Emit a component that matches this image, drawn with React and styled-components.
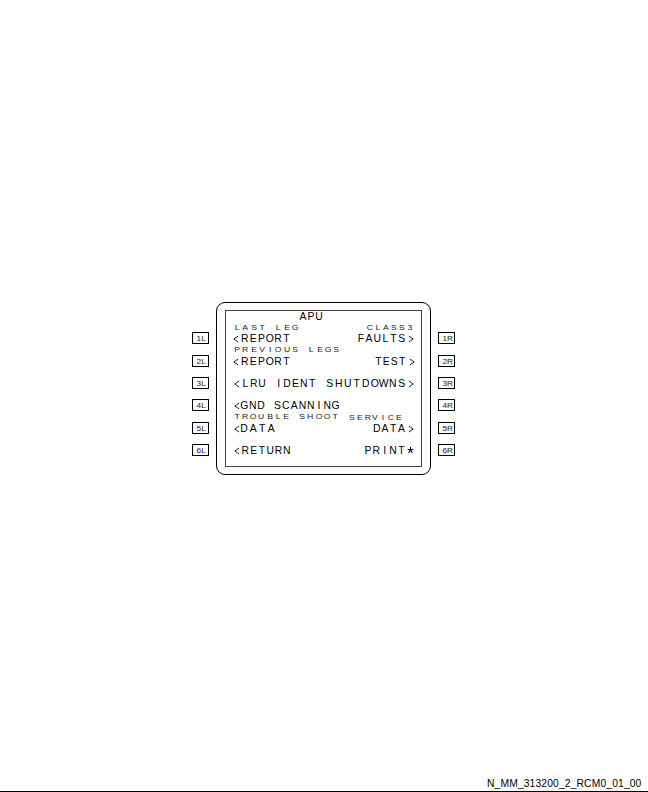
import React from "react";
import styled, { createGlobalStyle } from "styled-components";

const GlobalStyle = createGlobalStyle`
  * { box-sizing: border-box; }
  body { margin: 0; background: #fff; color: #000; font-family: "Liberation Sans", Arial, sans-serif; }
`;

const Page = styled.main`
  width: 648px;
  height: 792px;
  display: flex;
  flex-direction: column;
  justify-content: space-between;
  padding-top: 302px;
  border-bottom: 1px solid #000;
  overflow: hidden;
`;

const Unit = styled.section`
  display: flex;
  gap: 7px;
  margin-left: 192px;
`;

const KeyColumn = styled.div`
  display: grid;
  grid-template-rows: 23px 22px 22px 23px 22px 12px;
  width: 17px;
  padding-top: 30px;
`;

const Key = styled.div`
  height: 12px;
  display: flex;
  justify-content: center;
  padding-left: ${(p) => (p.$side === "R" ? 2 : 1)}px;
  border: 1px solid #000;
  font-size: 7.5px;
  line-height: 11px;
  color: #222;
`;

const KeyText = styled.span`
  transform: scaleX(1.1);
`;

const Bezel = styled.div`
  width: 215px;
  height: 173px;
  padding: 7px 8px;
  border: 1px solid #000;
  border-radius: 9px;
`;

const Screen = styled.div`
  width: 197px;
  height: 157px;
  border: 1px solid #444;
`;

const Title = styled.div`
  height: 11px;
  padding-left: 73px;
  line-height: 12px;
`;

const Row = styled.div`
  height: ${(p) => p.$height}px;
  display: flex;
  flex-direction: column;
  justify-content: flex-end;
`;

const Line = styled.div`
  display: flex;
  justify-content: space-between;
  height: ${(p) => (p.$small ? 10 : 12)}px;
  line-height: ${(p) => (p.$small ? 11 : 13)}px;
  padding: 0 7px 0 8px;
`;

const Side = styled.div`
  display: flex;
  gap: ${(p) => p.$gap || 0}px;
  margin: ${(p) => p.$down || 0}px ${(p) => p.$right || 0}px 0 ${(p) => p.$left || 0}px;
`;

const Label = styled.span`
  display: flex;
  font-size: ${(p) => (p.$small ? 7.5 : 10.4)}px;
  color: ${(p) => (p.$small ? "#222" : "#000")};
`;

const Cell = styled.span`
  width: ${(p) => p.$pitch}px;
  display: flex;
  justify-content: center;
  white-space: pre;
  transform: scaleX(${(p) => (p.$small ? 1.15 : 1)});
`;

const Mark = styled.svg`
  width: 6px;
  height: 8px;
  margin-top: 3px;
  fill: none;
  stroke: #222;
  stroke-width: 1;
`;

const Star = styled.svg`
  width: 7px;
  height: 8px;
  margin: 2px 0 0 -1px;
  fill: none;
  stroke: #000;
  stroke-width: 1.1;
`;

const Footer = styled.footer`
  margin-left: 487px;
  height: 15px;
  font-size: 10.3px;
  line-height: 15px;
  letter-spacing: 0.14px;
  white-space: nowrap;
`;

function Spaced({ text, pitch = 8.3, small = false }) {
  return (
    <Label $small={small}>
      {[...text].map((c, i) => <Cell key={i} $pitch={pitch} $small={small}>{c}</Cell>)}
    </Label>
  );
}

const Less = () => <Mark viewBox="0 0 6 8"><path d="M5.2 1 .8 4l4.4 3" /></Mark>;
const Greater = () => <Mark viewBox="0 0 6 8"><path d="m.8 1 4.4 3L.8 7" /></Mark>;
const Asterisk = () => (
  <Star viewBox="0 0 7 8"><path d="M3.5 1v3L.6 3.2M3.5 4l2.9-.8M3.5 4 1.6 7M3.5 4l1.9 3" /></Star>
);

const rows = [
  { height: 22, left: { text: "REPORT", x: -1, gap: 1.7 }, right: { text: "FAULTS", pitch: 8.15 },
    topLeft: { text: "LAST LEG" }, topRight: { text: "CLASS3", pitch: 8 } },
  { height: 23, left: { text: "REPORT", x: -1, gap: 1.7 }, right: { text: "TEST", pitch: 7.9, x: -0.5, gap: 2.5 },
    topLeft: { text: "PREVIOUS LEGS", pitch: 8.25, y: -1 } },
  { height: 22, left: { text: "LRU IDENT", pitch: 8.35, gap: 1.2 }, right: { text: "SHUTDOWNS", pitch: 9, gap: 1.8 } },
  { height: 22, left: { text: "GND SCANNING", gap: 0.2 } },
  { height: 23, left: { text: "DATA", pitch: 9.1, x: -0.5 }, right: { text: "DATA" },
    topLeft: { text: "TROUBLE SHOOT", pitch: 8.17, y: -1 }, topRight: { text: "SERVICE", pitch: 7.8, x: 11.5 } },
  { height: 22, left: { text: "RETURN", gap: 1.2 }, right: { text: "PRINT", pitch: 8.4, star: true } },
];

function MenuRow({ row }) {
  const { left, right, topLeft, topRight } = row;
  return (
    <Row $height={row.height}>
      {topLeft && (
        <Line $small>
          <Side $left={-1} $down={topLeft.y}>
            <Spaced small text={topLeft.text} pitch={topLeft.pitch} />
          </Side>
          {topRight && (
            <Side $right={topRight.x}>
              <Spaced small text={topRight.text} pitch={topRight.pitch} />
            </Side>
          )}
        </Line>
      )}
      <Line>
        <Side $left={left.x} $gap={left.gap}>
          <Less />
          <Spaced text={left.text} pitch={left.pitch} />
        </Side>
        {right && (
          <Side $right={right.x} $gap={right.gap || 2.3}>
            <Spaced text={right.text} pitch={right.pitch} />
            {right.star ? <Asterisk /> : <Greater />}
          </Side>
        )}
      </Line>
    </Row>
  );
}

const Keys = ({ side }) => (
  <KeyColumn>
    {[1, 2, 3, 4, 5, 6].map((n) => (
      <Key key={n} $side={side}><KeyText>{n}{side}</KeyText></Key>
    ))}
  </KeyColumn>
);

export default function App() {
  return (
    <>
      <GlobalStyle />
      <Page>
        <Unit>
          <Keys side="L" />
          <Bezel>
            <Screen>
              <Title><Spaced text="APU" pitch={8} /></Title>
              {rows.map((row, i) => <MenuRow key={i} row={row} />)}
            </Screen>
          </Bezel>
          <Keys side="R" />
        </Unit>
        <Footer>N_MM_313200_2_RCM0_01_00</Footer>
      </Page>
    </>
  );
}
